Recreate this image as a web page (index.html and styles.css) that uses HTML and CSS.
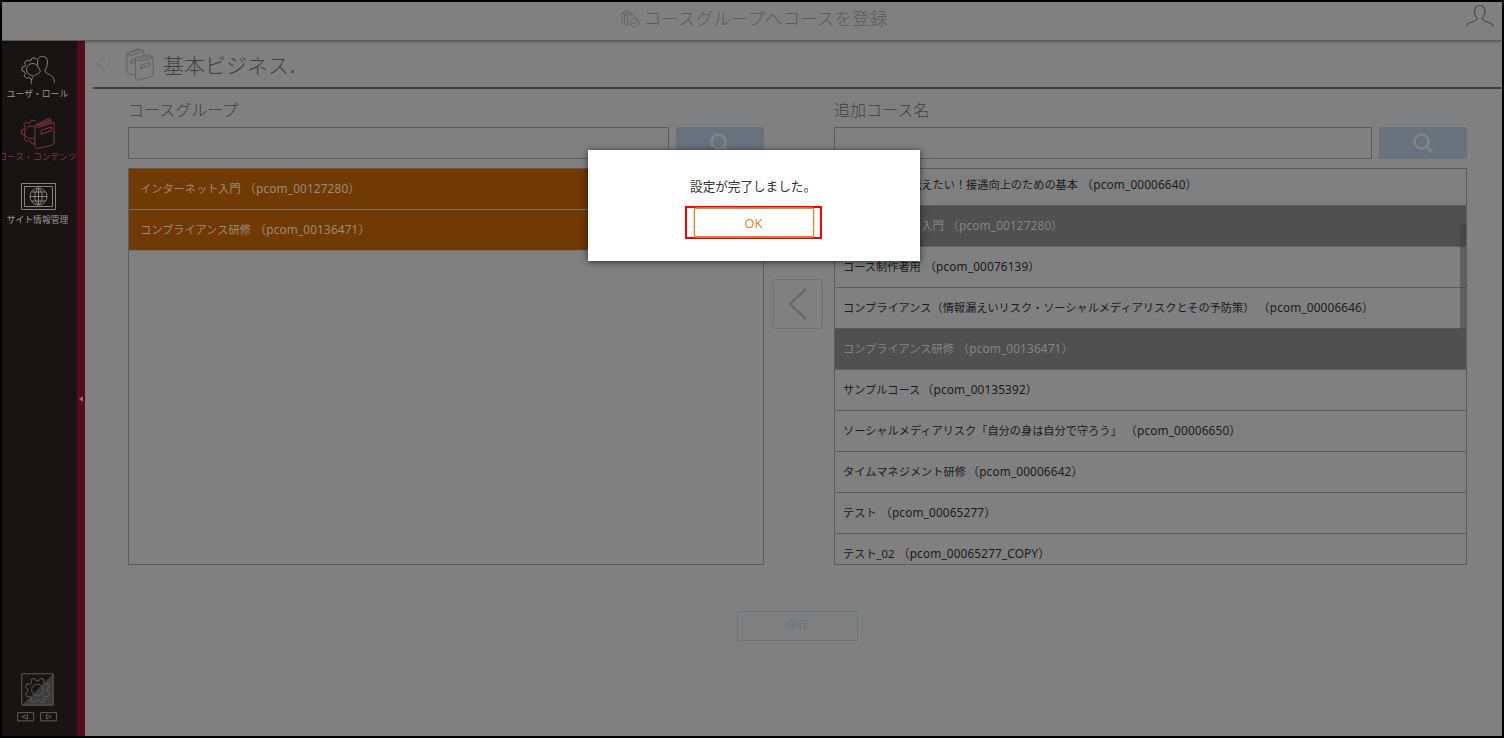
FILE: index.html
```
<!DOCTYPE html>
<html lang="ja">
<head>
<meta charset="utf-8">
<title>コースグループへコースを登録</title>
<link rel="stylesheet" href="styles.css">
</head>
<body>
<div class="app">
  <header class="topbar">
    <div class="topbar-title">
      <svg class="title-icon" width="19" height="18" viewBox="0 0 19 18"><path d="M1 3v8.500l2 1M1 3l5-2 3 1.500M3.500 4.500v9l3 1.500M3.500 4.500l5-2 3 1.500M6.500 6v9l2 .5M6.500 6l5-2 2.500 1.500v2M1 3l5.500 3"/><circle cx="13.500" cy="12.500" r="4.300"/><path d="M10.500 14.500l6-4"/></svg>
      <span>コースグループへコースを登録</span>
    </div>
    <svg class="user-icon" width="28" height="23" viewBox="0 0 28 23"><path d="M.5 22.500c.3-3 2-3.300 4.500-4.100 3.500-1.200 6-1.700 6.100-4.100-.7-.7-1.500-2-1.900-3.800-1-.4-1.400-2.700-.6-3.200C8.700 3 10 1.500 13.500 1.500s5.500 1.500 5.200 5.800c.8.500.4 2.800-.6 3.200-.4 1.800-1.200 3.100-1.900 3.800.1 2.400 2.600 2.900 6.100 4.100 2.500.8 4.600 1.100 4.900 4.100"/></svg>
  </header>
  <div class="body">
    <nav class="sidebar">
      <a class="nav-item">
        <svg width="40" height="32" viewBox="0 0 40 32"><path d="M18.500 5.500l-1.500-1.500h-3l-.7 2.200-1.800.8-2.200-1L6.500 8.500l1 2.200-.8 1.800-2.700.8v3.500l2.500.9.8 1.900-1.200 2.200 2.400 2.600 2.300-1 1.800.8.800 2.300"/><path d="M14.800 21.500a6 6 0 1 1 4.200-10M12.900 30c.7-6 2-8.200 5.500-9.700 2.800-1.100 4.500-2 3.600-4.300-2-2.400-2.700-4.500-2.500-8 .2-4 1.500-5.500 5-5.500s4.900 2 4.900 5.400c0 3.500-.8 6.200-2.400 8.100-.5 2.600 1.300 3.200 4.300 4.500 3.500 1.700 4.300 3 5.300 8.300"/></svg>
        <span>ユーザ・ロール</span>
      </a>
      <a class="nav-item active">
        <svg width="40" height="32" viewBox="0 0 40 32"><path d="M18 5l-1-1.500-3.600-.4-.8 2.200-2 .9-2.200-1L5.800 7.900l1.100 2.200-.8 2-2.700.9.200 3.700 2.500.7 1 2-1.100 2.300 2.500 2.800 2.400-.9 1.900.9.900 2.300 2.900-.1"/><path d="M15.700 20.900a6.200 6.200 0 1 1 0-11"/><path d="M16.800 9.800c-.3-1 .2-1.500 1-1.800L31 1.500l2 1.300M17 8.500c1.500 2.500 4 2 5.500 1.500l13.500-4.700v21c0 1-.5 1.400-1.400 1.700L21 31.300c-2 .6-3.700-.1-4.200-1.800zM19 8.500l13-5.400 1 1M21 9l13-5"/><path d="M23.200 13.500l10.300-3.700v3.700l-10.300 3.800z"/></svg>
        <span>コース・コンテンツ</span>
      </a>
      <a class="nav-item">
        <svg width="40" height="32" viewBox="0 0 40 32"><path d="M3.500 3.500h34v26h-34zM6.500 6.500h28v20h-28z"/><circle cx="20.500" cy="16.500" r="8.500"/><path d="M20.500 8v17M12 16.500h17M14 12h13M14 21h13M20.500 8c-5 4-5 13 0 17M20.500 8c5 4 5 13 0 17"/></svg>
        <span>サイト情報管理</span>
      </a>
      <div class="nav-foot">
        <svg width="33" height="33" viewBox="0 0 33 33"><path class="shade" d="M32 1v31H1z"/><path d="M.8.800h31.400v31.400H.8z"/><path d="M13.300 5.200l2 2.700h2.400l2-2.700 3.300 1.400-.5 3.200 1.600 1.600 3.200-.6 1.500 3.300-2.700 2v2.500l2.700 2-1.500 3.300-3.200-.5-1.700 1.700.6 3.100-3.300 1.400-2-2.700h-2.400l-2 2.700-3.200-1.400.5-3.200-1.700-1.600-3.100.5-1.400-3.300 2.600-2v-2.400l-2.600-2 1.400-3.300 3.200.5 1.600-1.700-.5-3.100z"/><circle cx="16.500" cy="17" r="5.800"/></svg>
        <svg width="41" height="10" viewBox="0 0 41 10"><path d="M.6.600h16v8.300H.6zM23.600.600h16v8.300h-16z"/><path d="M10.500 2.500v4.500L5 4.700zM29.500 2.500v4.500l5-2.300z"/></svg>
      </div>
    </nav>
    <div class="rail"><i class="rail-mark"></i></div>
    <main class="content">
      <div class="heading">
        <svg class="back" width="11" height="18" viewBox="0 0 11 18"><path d="M9.500 1L1 8.500 9.500 16"/></svg>
        <svg class="books" width="28" height="33" viewBox="0 0 28 33"><path d="M9 27l-5.500-1C1.500 25.500.8 24.800.8 23V5.500L12 .8l6 2-.4 4M.8 5.500c1 1.500 3 1.800 5 1.500L17.600 3M3 5l11-3.500"/><path d="M9.500 11v20c.5 1 1.500 1.300 3 1l13-3.500c1-.4 1.600-1 1.600-2V9.500L22 6.500 10.500 9.500c-1 .5-1.200 1-1 1.500 1.500 2 4 2 6 1.500l11.500-3M12.500 11l12-3.500M5 12.500l4.500-1.500M5 12.500v3l4.500-1.300"/><path d="M14.500 17.500l9-3v3l-9 3z"/></svg>
        <h1>基本ビジネス<span>.</span></h1>
      </div>
      <div class="columns">
        <section class="panel left">
          <h2>コースグループ</h2>
          <div class="search"><div class="field"></div><button class="search-btn"><svg width="21" height="21" viewBox="0 0 21 21"><circle cx="8.500" cy="8.500" r="7"/><path d="M13.500 13.500l5.500 5.500"/></svg></button></div>
          <ul class="list">
            <li class="row on">インターネット入門 <span>（pcom_00127280）</span></li>
            <li class="row on">コンプライアンス研修 <span>（pcom_00136471）</span></li>
          </ul>
        </section>
        <div class="mover"><button class="move-btn"><svg width="20" height="32" viewBox="0 0 20 32"><path d="M18 1L2 16l16 15"/></svg></button></div>
        <section class="panel right">
          <h2>追加コース名</h2>
          <div class="search"><div class="field"></div><button class="search-btn"><svg width="21" height="21" viewBox="0 0 21 21"><circle cx="8.500" cy="8.500" r="7"/><path d="M13.500 13.500l5.500 5.500"/></svg></button></div>
          <ul class="list">
            <li class="row">今こそ皆様に伝えたい！接遇向上のための基本 <span>（pcom_00006640）</span></li>
            <li class="row used">インターネット入門 <span>（pcom_00127280）</span></li>
            <li class="row">コース制作者用 <span>（pcom_00076139）</span></li>
            <li class="row">コンプライアンス（情報漏えいリスク・ソーシャルメディアリスクとその予防策） <span>（pcom_00006646）</span></li>
            <li class="row used">コンプライアンス研修 <span>（pcom_00136471）</span></li>
            <li class="row tight">サンプルコース <span>（pcom_00135392）</span></li>
            <li class="row">ソーシャルメディアリスク「自分の身は自分で守ろう」 <span>（pcom_00006650）</span></li>
            <li class="row tight">タイムマネジメント研修 <span>（pcom_00006642）</span></li>
            <li class="row">テスト <span>（pcom_00065277）</span></li>
            <li class="row">テスト_02 <span>（pcom_00065277_COPY）</span></li>
          </ul>
          <i class="thumb"></i>
        </section>
      </div>
      <button class="save">保存</button>
    </main>
  </div>
  <div class="dialog">
    <p>設定が完了しました。</p>
    <div class="mark"><button class="ok">OK</button></div>
  </div>
</div>
</body>
</html>
```
FILE: styles.css
```
* { box-sizing: border-box; }
body { margin: 0; font-family: "Noto Sans", "Noto Sans CJK JP", sans-serif; background: #000; }
h1, h2, p, ul { margin: 0; padding: 0; }
h1, h2 { font-weight: 300; }
button { padding: 0; font: inherit; }
svg { display: block; fill: none; stroke: currentColor; flex: none; }
.app { position: relative; width: 1504px; height: 738px; border: 2px solid #000; background: #808080; display: flex; flex-direction: column; overflow: hidden; }
.topbar { position: relative; height: 39px; flex: none; border-bottom: 1px solid #5a5a5a; box-shadow: 0 1px 3px rgba(0,0,0,.3); display: flex; justify-content: center; z-index: 1; }
.topbar-title { display: flex; align-items: center; gap: 4px; height: 31px; padding-left: 4px; color: #5b5b5b; font-family: "Noto Sans CJK JP", sans-serif; font-weight: 300; font-size: 17.600px; }
.title-icon { margin-top: 2px; color: #626262; stroke-width: .9; }
.user-icon { position: absolute; right: 8px; top: 2px; color: #484848; stroke-width: 1.100; }
.body { flex: 1; display: flex; min-height: 0; }
.sidebar { width: 75px; flex: none; background: #181413; color: #858585; display: flex; flex-direction: column; align-items: center; padding: 13px 4px 0 0; }
.nav-item { height: 63px; display: flex; flex-direction: column; align-items: center; white-space: nowrap; font-size: 8.800px; line-height: 16px; font-family: "Noto Sans CJK JP", sans-serif; }
.nav-item span { color: #999; }
.nav-item svg { stroke-width: 1; }
.nav-item.active, .nav-item.active span { color: #87353c; }
.nav-foot { margin-top: auto; padding-bottom: 14px; display: flex; flex-direction: column; align-items: center; gap: 6px; color: #5c5c5c; }
.shade { fill: #3c3c3c; stroke: none; }
.rail { width: 8px; flex: none; background: #550c18; display: flex; align-items: center; padding-top: 20px; }
.rail-mark { margin-left: 2px; border: 3px solid transparent; border-left: 0; border-right: 4px solid #8a7175; }
.content { flex: 1; display: flex; flex-direction: column; min-width: 0; }
.heading { height: 48px; flex: none; margin-left: 8px; border-bottom: 2px solid #404040; display: flex; padding-left: 3px; color: #555; }
.back { margin-top: 14px; color: #686868; }
.books { margin: 7px 0 0 19px; color: #606060; }
.heading h1 { margin-left: 9px; font-family: "Noto Sans CJK JP", sans-serif; font-size: 21px; line-height: 46px; color: #404040; }
.heading h1 span { font-family: "DejaVu Sans", sans-serif; font-weight: 400; font-size: 22px; }
.columns { display: flex; padding-left: 43px; flex: none; }
.panel h2 { height: 38px; padding-top: 9px; font-family: "Noto Sans CJK JP", sans-serif; font-size: 16px; line-height: 22px; color: #404040; }
.left { width: 636px; }
.right { width: 633px; position: relative; }
.search { display: flex; gap: 7px; height: 32px; margin-bottom: 9px; }
.field { flex: 1; border: 1px solid #5c5c5c; }
.search-btn { width: 88px; border: 1px solid #68747d; border-radius: 2px; background: #68737d; display: flex; justify-content: center; padding-top: 5px; color: #858585; }
.search-btn svg { stroke-width: 2.600; }
.list { list-style: none; height: 397px; border: 1px solid #5c5c5c; overflow: hidden; }
.row { height: 41px; border-bottom: 1px solid #5c5c5c; padding-left: 8px; font-size: 11.200px; line-height: 39px; color: #1b1b1b; white-space: pre; }
.row span { font-size: 11.800px; letter-spacing: .15px; margin-left: .5px; }
.row.tight span { margin-left: -1.500px; }
.left .row { padding-left: 11px; }
.row.on { background: #703a04; color: #9a8b7d; border-color: #85705c; }
.row.used { background: #505050; color: #858585; border-color: #606060; }
.right .row:first-child { margin-top: -4px; }
.thumb { position: absolute; right: 1px; top: 135px; width: 6px; height: 105px; background: rgba(60,60,60,.45); border-radius: 3px 3px 0 0; }
.mover { width: 70px; padding: 190px 0 0 9px; }
.move-btn { width: 50px; height: 50px; background: none; border: 1px solid #717171; border-radius: 3px; color: #646464; display: flex; align-items: center; justify-content: center; }
.move-btn svg { stroke-width: 2; }
.save { width: 121px; height: 30px; margin: 46px 0 0 652px; border: 1px solid #6b747b; border-radius: 2px; background: none; color: #6b747b; font-size: 11.200px; line-height: 26px; padding-bottom: 2px; }
.dialog { position: absolute; z-index: 2; left: 586px; top: 148px; width: 332px; height: 111px; background: #fff; box-shadow: 0 1px 7px rgba(0,0,0,.65); display: flex; flex-direction: column; align-items: center; padding: 26px 2px 0 0; }
.dialog p { font-family: "Noto Sans CJK JP", sans-serif; font-size: 12.600px; line-height: 19px; height: 30px; color: #333; }
.mark { width: 137px; height: 33px; border: 2px solid #f00; display: flex; justify-content: center; padding-left: 1px; }
.ok { width: 120px; height: 29px; border: 1px solid #e08a2a; border-radius: 2px; background: #fff; color: #e08214; font-family: "Open Sans", sans-serif; font-size: 12.800px; box-shadow: 0 0 0 .5px #f0b070; }
```
